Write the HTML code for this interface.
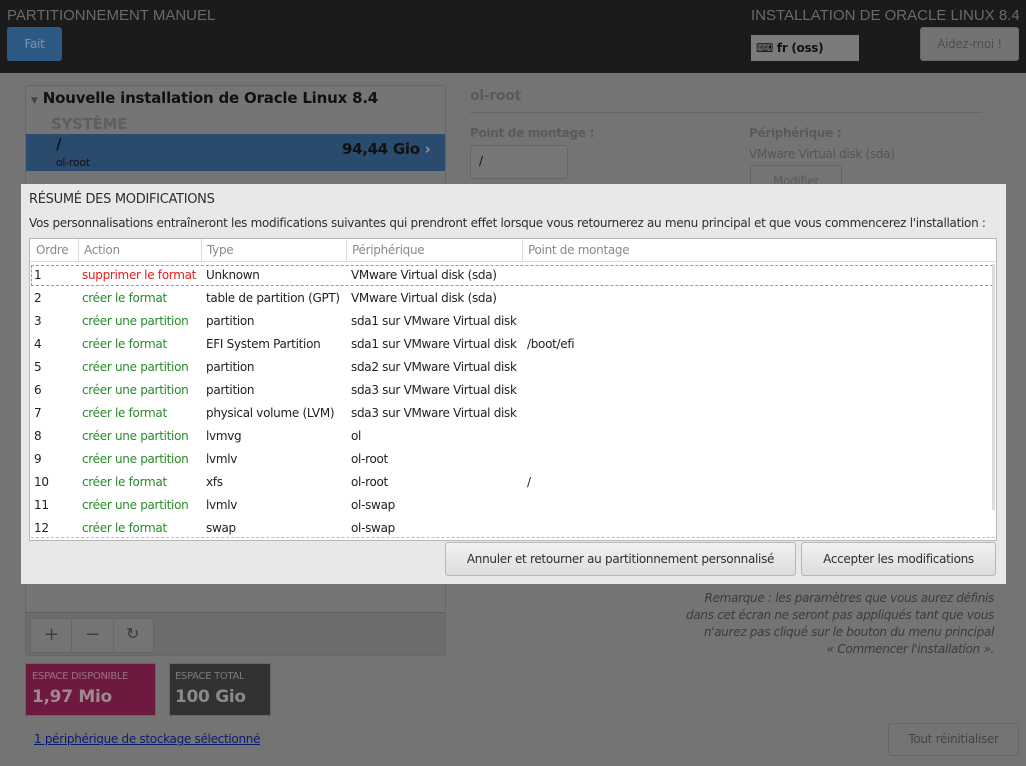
<!DOCTYPE html>
<html><head><meta charset="utf-8"><style>
*{margin:0;padding:0;box-sizing:border-box}
body{width:1026px;height:766px;overflow:hidden;background:#747474;font-family:"DejaVu Sans","Liberation Sans",sans-serif;font-size:12px;position:relative;color:#2e2e2e;letter-spacing:-0.3px}
.a{position:absolute;white-space:nowrap}
#hdr{position:absolute;left:0;top:0;width:1026px;height:73px;background:#1b1b1b}
</style></head><body>
<div id="hdr"></div>
<div class="a" style="left:7px;top:7px;font-size:15px;color:#6a6a6a;font-family:'Liberation Sans',sans-serif;letter-spacing:0">PARTITIONNEMENT MANUEL</div>
<div class="a" style="left:7px;top:27px;width:55px;height:34px;background:#2d5a85;border-radius:3px;color:#7f94aa;text-align:center;line-height:34px">Fait</div>
<div class="a" style="left:751px;top:7px;font-size:15px;color:#6a6a6a;font-family:'Liberation Sans',sans-serif;letter-spacing:0">INSTALLATION DE ORACLE LINUX 8.4</div>
<div class="a" style="left:751px;top:35px;width:108px;height:26px;background:#7b7b7b;color:#111;font-weight:bold;line-height:26px;padding-left:5px">⌨ fr (oss)</div>
<div class="a" style="left:920px;top:27px;width:99px;height:34px;background:#737373;border:1px solid #666;border-radius:3px;color:#4d4d4d;text-align:center;line-height:32px">Aidez-moi !</div>

<div class="a" style="left:25px;top:85px;width:421px;height:571px;border:1px solid #676767;border-radius:3px;background:#757575"></div>
<div class="a" style="left:26px;top:612px;width:419px;height:43px;background:#6c6c6c;border-top:1px solid #606060"></div>
<div class="a" style="left:30px;top:618px;width:124px;height:35px;border:1px solid #676767;border-radius:3px;background:#747474"></div>
<div class="a" style="left:71px;top:618px;width:1px;height:35px;background:#676767"></div>
<div class="a" style="left:113px;top:618px;width:1px;height:35px;background:#676767"></div>
<div class="a" style="left:44px;top:624px;font-size:18px;color:#3d3d3d">+</div>
<div class="a" style="left:85px;top:624px;font-size:18px;color:#3d3d3d">−</div>
<div class="a" style="left:126px;top:624px;font-size:16px;color:#3d3d3d">↻</div>
<div class="a" style="left:31px;top:89px;font-size:15px;color:#111;font-weight:bold;letter-spacing:-0.2px"><span style="font-size:9px;color:#444">▼</span> Nouvelle installation de Oracle Linux 8.4</div>
<div class="a" style="left:51px;top:115px;font-size:15px;color:#5e5e5e;font-weight:bold">SYSTÈME</div>
<div class="a" style="left:26px;top:134px;width:419px;height:37px;background:#2a4a6e"></div>
<div class="a" style="left:56px;top:135px;font-size:15px;font-weight:bold;color:#111">/</div>
<div class="a" style="left:56px;top:156px;font-size:11px;color:#111">ol-root</div>
<div class="a" style="left:342px;top:140px;font-size:15px;font-weight:bold;color:#111">94,44 Gio <span style="color:#8a9ab0">›</span></div>

<div class="a" style="left:470px;top:88px;font-size:14px;color:#5a5a5a;font-weight:bold">ol-root</div>
<div class="a" style="left:470px;top:112px;width:512px;height:1px;background:#666"></div>
<div class="a" style="left:470px;top:126px;color:#5a5a5a;font-weight:bold">Point de montage :</div>
<div class="a" style="left:470px;top:145px;width:98px;height:34px;border:1px solid #666;border-radius:3px;background:#777;padding:8px;color:#111">/</div>
<div class="a" style="left:749px;top:126px;color:#5a5a5a;font-weight:bold">Périphérique :</div>
<div class="a" style="left:749px;top:147px;color:#555">VMware Virtual disk (sda)</div>
<div class="a" style="left:750px;top:165px;width:92px;height:30px;border:1px solid #666;border-radius:3px;color:#5a5a5a;text-align:center;padding-top:8px">Modifier</div>

<div class="a" style="left:25px;top:663px;width:131px;height:53px;background:#6e1a40;border:1px solid #666"></div>
<div class="a" style="left:32px;top:671px;font-size:10px;color:#9a7080">ESPACE DISPONIBLE</div>
<div class="a" style="left:32px;top:687px;font-size:17px;font-weight:bold;color:#a08890">1,97 Mio</div>
<div class="a" style="left:169px;top:663px;width:102px;height:53px;background:#323232;border:1px solid #666"></div>
<div class="a" style="left:175px;top:671px;font-size:10px;color:#7a7a7a">ESPACE TOTAL</div>
<div class="a" style="left:175px;top:687px;font-size:17px;font-weight:bold;color:#8a8a8a">100 Gio</div>
<div class="a" style="left:34px;top:732px;color:#0c1a70;text-decoration:underline">1 périphérique de stockage sélectionné</div>

<div class="a" style="right:32px;top:590px;text-align:right;font-style:italic;color:#3c3c3c;line-height:17px">Remarque : les paramètres que vous aurez définis<br>dans cet écran ne seront pas appliqués tant que vous<br>n'aurez pas cliqué sur le bouton du menu principal<br>« Commencer l'installation ».</div>
<div class="a" style="left:888px;top:723px;width:131px;height:33px;border:1px solid #666;border-radius:3px;color:#444;text-align:center;line-height:31px">Tout réinitialiser</div>

<div class="a" style="left:21px;top:184px;width:985px;height:400px;background:#e8e8e7"></div>
<div class="a" style="left:29px;top:192px;font-size:13px;color:#2e2e2e">RÉSUMÉ DES MODIFICATIONS</div>
<div class="a" style="left:29px;top:216px;color:#2e2e2e">Vos personnalisations entraîneront les modifications suivantes qui prendront effet lorsque vous retournerez au menu principal et que vous commencerez l'installation :</div>
<div class="a" style="left:29px;top:238px;width:968px;height:303px;background:#fff;border:1px solid #b8b8b8"></div>
<div class="a" style="left:30px;top:239px;width:966px;height:23px;border-bottom:1px solid #ddd;color:#8a8a8a">
<span class="a" style="left:6px;top:4px">Ordre</span><span class="a" style="left:48px;top:0;width:1px;height:23px;background:#ddd"></span>
<span class="a" style="left:54px;top:4px">Action</span><span class="a" style="left:171px;top:0;width:1px;height:23px;background:#ddd"></span>
<span class="a" style="left:177px;top:4px">Type</span><span class="a" style="left:316px;top:0;width:1px;height:23px;background:#ddd"></span>
<span class="a" style="left:322px;top:4px">Périphérique</span><span class="a" style="left:492px;top:0;width:1px;height:23px;background:#ddd"></span>
<span class="a" style="left:498px;top:4px">Point de montage</span></div>
<div class="a" style="left:31px;top:265px;width:962px;height:21px;border:1px dashed #999"></div>
<div class="a" style="left:992px;top:264px;width:3px;height:246px;background:#ddd"></div>
<div class="a" style="left:31px;top:537px;width:964px;height:1px;border-top:1px dashed #bbb"></div>
<div class="a" style="left:445px;top:542px;width:351px;height:34px;border:1px solid #b5b5b5;border-radius:3px;background:linear-gradient(#f2f2f2,#dcdcdc);text-align:center;line-height:32px;color:#2e2e2e">Annuler et retourner au partitionnement personnalisé</div>
<div class="a" style="left:801px;top:542px;width:195px;height:34px;border:1px solid #b5b5b5;border-radius:3px;background:linear-gradient(#f2f2f2,#dcdcdc);text-align:center;line-height:32px;color:#2e2e2e">Accepter les modifications</div>

<div class="a" style="left:34px;top:264px;line-height:23px;color:#222">1<br>2<br>3<br>4<br>5<br>6<br>7<br>8<br>9<br>10<br>11<br>12</div>
<div class="a" style="left:82px;top:264px;line-height:23px;color:#2a8a2a"><span style="color:#e02020">supprimer le format</span><br>créer le format<br>créer une partition<br>créer le format<br>créer une partition<br>créer une partition<br>créer le format<br>créer une partition<br>créer une partition<br>créer le format<br>créer une partition<br>créer le format</div>
<div class="a" style="left:206px;top:264px;line-height:23px;color:#222">Unknown<br>table de partition (GPT)<br>partition<br>EFI System Partition<br>partition<br>partition<br>physical volume (LVM)<br>lvmvg<br>lvmlv<br>xfs<br>lvmlv<br>swap</div>
<div class="a" style="left:351px;top:264px;line-height:23px;color:#222">VMware Virtual disk (sda)<br>VMware Virtual disk (sda)<br>sda1 sur VMware Virtual disk<br>sda1 sur VMware Virtual disk<br>sda2 sur VMware Virtual disk<br>sda3 sur VMware Virtual disk<br>sda3 sur VMware Virtual disk<br>ol<br>ol-root<br>ol-root<br>ol-swap<br>ol-swap</div>
<div class="a" style="left:527px;top:264px;line-height:23px;color:#222"><br><br><br>/boot/efi<br><br><br><br><br><br>/</div>
</body></html>
